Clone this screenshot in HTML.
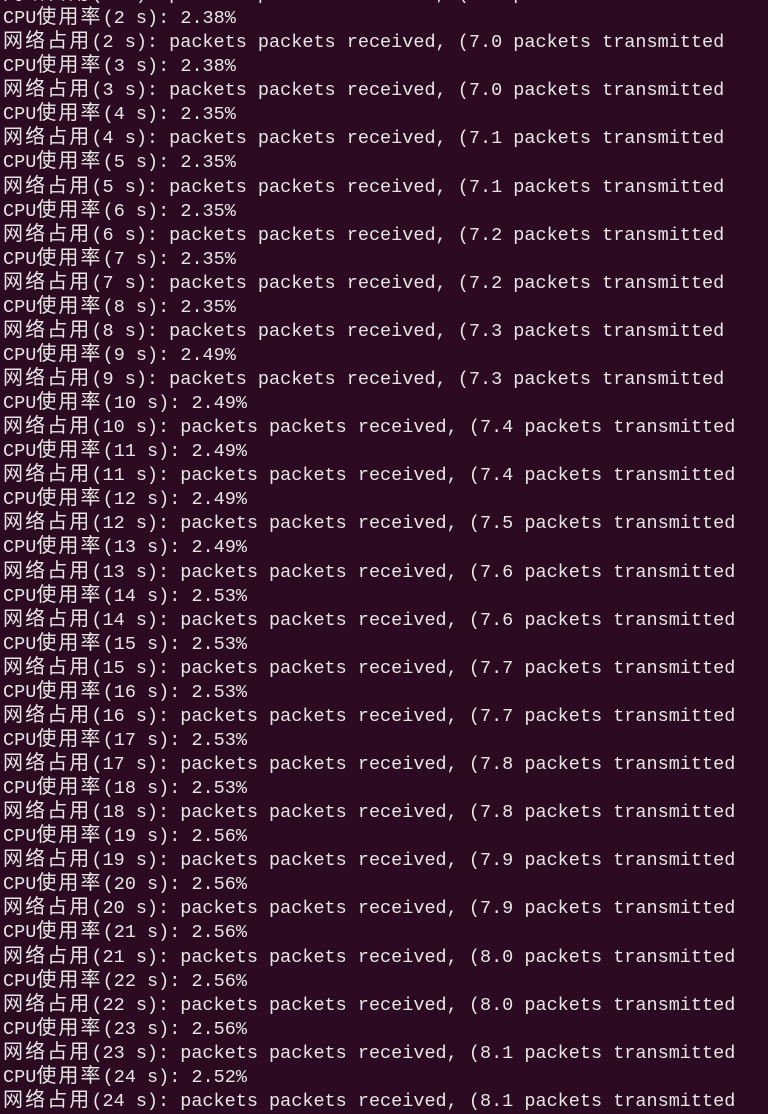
<!DOCTYPE html>
<html><head><meta charset="utf-8"><style>
html,body{margin:0;padding:0;width:768px;height:1113px;overflow:hidden;background:#2c0a22;}
#t{position:absolute;left:3px;top:-21px;color:#e6e6e6;font-family:"Liberation Mono",monospace;font-size:18.5px;}
#t div{height:24.07px;line-height:24.07px;white-space:pre;}
.c{font-family:"Noto Sans CJK SC",sans-serif;font-size:20px;letter-spacing:2.1px;}
</style></head><body><div id="t">
<div><span class="c">网络占用</span>(1 s): packets packets received, (6.9 packets transmitted</div>
<div>CPU<span class="c">使用率</span>(2 s): 2.38%</div>
<div><span class="c">网络占用</span>(2 s): packets packets received, (7.0 packets transmitted</div>
<div>CPU<span class="c">使用率</span>(3 s): 2.38%</div>
<div><span class="c">网络占用</span>(3 s): packets packets received, (7.0 packets transmitted</div>
<div>CPU<span class="c">使用率</span>(4 s): 2.35%</div>
<div><span class="c">网络占用</span>(4 s): packets packets received, (7.1 packets transmitted</div>
<div>CPU<span class="c">使用率</span>(5 s): 2.35%</div>
<div><span class="c">网络占用</span>(5 s): packets packets received, (7.1 packets transmitted</div>
<div>CPU<span class="c">使用率</span>(6 s): 2.35%</div>
<div><span class="c">网络占用</span>(6 s): packets packets received, (7.2 packets transmitted</div>
<div>CPU<span class="c">使用率</span>(7 s): 2.35%</div>
<div><span class="c">网络占用</span>(7 s): packets packets received, (7.2 packets transmitted</div>
<div>CPU<span class="c">使用率</span>(8 s): 2.35%</div>
<div><span class="c">网络占用</span>(8 s): packets packets received, (7.3 packets transmitted</div>
<div>CPU<span class="c">使用率</span>(9 s): 2.49%</div>
<div><span class="c">网络占用</span>(9 s): packets packets received, (7.3 packets transmitted</div>
<div>CPU<span class="c">使用率</span>(10 s): 2.49%</div>
<div><span class="c">网络占用</span>(10 s): packets packets received, (7.4 packets transmitted</div>
<div>CPU<span class="c">使用率</span>(11 s): 2.49%</div>
<div><span class="c">网络占用</span>(11 s): packets packets received, (7.4 packets transmitted</div>
<div>CPU<span class="c">使用率</span>(12 s): 2.49%</div>
<div><span class="c">网络占用</span>(12 s): packets packets received, (7.5 packets transmitted</div>
<div>CPU<span class="c">使用率</span>(13 s): 2.49%</div>
<div><span class="c">网络占用</span>(13 s): packets packets received, (7.6 packets transmitted</div>
<div>CPU<span class="c">使用率</span>(14 s): 2.53%</div>
<div><span class="c">网络占用</span>(14 s): packets packets received, (7.6 packets transmitted</div>
<div>CPU<span class="c">使用率</span>(15 s): 2.53%</div>
<div><span class="c">网络占用</span>(15 s): packets packets received, (7.7 packets transmitted</div>
<div>CPU<span class="c">使用率</span>(16 s): 2.53%</div>
<div><span class="c">网络占用</span>(16 s): packets packets received, (7.7 packets transmitted</div>
<div>CPU<span class="c">使用率</span>(17 s): 2.53%</div>
<div><span class="c">网络占用</span>(17 s): packets packets received, (7.8 packets transmitted</div>
<div>CPU<span class="c">使用率</span>(18 s): 2.53%</div>
<div><span class="c">网络占用</span>(18 s): packets packets received, (7.8 packets transmitted</div>
<div>CPU<span class="c">使用率</span>(19 s): 2.56%</div>
<div><span class="c">网络占用</span>(19 s): packets packets received, (7.9 packets transmitted</div>
<div>CPU<span class="c">使用率</span>(20 s): 2.56%</div>
<div><span class="c">网络占用</span>(20 s): packets packets received, (7.9 packets transmitted</div>
<div>CPU<span class="c">使用率</span>(21 s): 2.56%</div>
<div><span class="c">网络占用</span>(21 s): packets packets received, (8.0 packets transmitted</div>
<div>CPU<span class="c">使用率</span>(22 s): 2.56%</div>
<div><span class="c">网络占用</span>(22 s): packets packets received, (8.0 packets transmitted</div>
<div>CPU<span class="c">使用率</span>(23 s): 2.56%</div>
<div><span class="c">网络占用</span>(23 s): packets packets received, (8.1 packets transmitted</div>
<div>CPU<span class="c">使用率</span>(24 s): 2.52%</div>
<div><span class="c">网络占用</span>(24 s): packets packets received, (8.1 packets transmitted</div>
</div></body></html>
